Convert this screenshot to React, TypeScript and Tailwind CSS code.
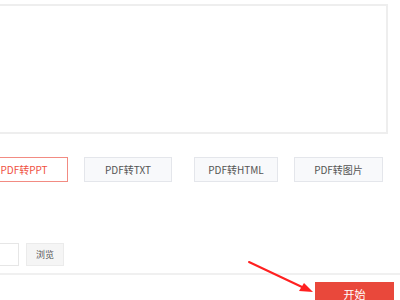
import React from "react";

const tabs = [
  { label: "PDF转PPT", w: "w-[88px]", ml: "-ml-[20px]", active: true },
  { label: "PDF转TXT", w: "w-[88px]", ml: "ml-[16px]", active: false },
  { label: "PDF转HTML", w: "w-[84px]", ml: "ml-[22px]", active: false },
  { label: "PDF转图片", w: "w-[89px]", ml: "ml-[16px]", active: false },
];

const Arrow = () => (
  <svg className="pointer-events-none absolute inset-0" width="400" height="300" viewBox="0 0 400 300">
    <line x1="249" y1="262" x2="302" y2="287" stroke="#ff2020" strokeWidth="2" strokeLinecap="round" />
    <polygon points="313,292 299,291 304,283" fill="#ff2020" />
  </svg>
);

const App = () => {
  return (
    <div className="relative h-[300px] w-[400px] overflow-hidden bg-white font-['Noto_Sans_CJK_SC','Noto_Sans',sans-serif]">
      {/* text area */}
      <div className="mt-[4px] h-[130px] w-[388px] border-t-2 border-r-2 border-b-2 border-[#eeeeee] bg-white" />

      {/* conversion types */}
      <div className="mt-[23px] flex h-[25px] flex-row">
        {tabs.map((t) => (
          <div
            key={t.label}
            className={`${t.w} ${t.ml} flex shrink-0 items-center justify-center border text-[10px] ${
              t.active
                ? "border-[#f28b82] bg-white text-[#f0503f]"
                : "border-[#e4e6eb] bg-[#f8f9fb] text-[#555555]"
            }`}
          >
            {t.label}
          </div>
        ))}
      </div>

      {/* output folder */}
      <div className="mt-[61px] flex h-[23px] flex-row">
        <div className="-ml-[10px] w-[29px] border border-[#e6e6e6] bg-white" />
        <div className="ml-[7px] flex w-[38px] items-center justify-center border border-[#ebebeb] bg-[#f5f5f5] text-[9px] text-[#555555]">
          浏览
        </div>
      </div>

      <div className="mt-[7px] h-[2px] w-full bg-[#f0f0f0]" />

      {/* start */}
      <div className="mt-[7px] flex flex-row justify-end pr-[6px]">
        <div className="flex h-[24px] w-[79px] items-center justify-center bg-[#e9483b] text-[11px] text-white">
          开始
        </div>
      </div>

      <Arrow />
    </div>
  );
};

export default App;
